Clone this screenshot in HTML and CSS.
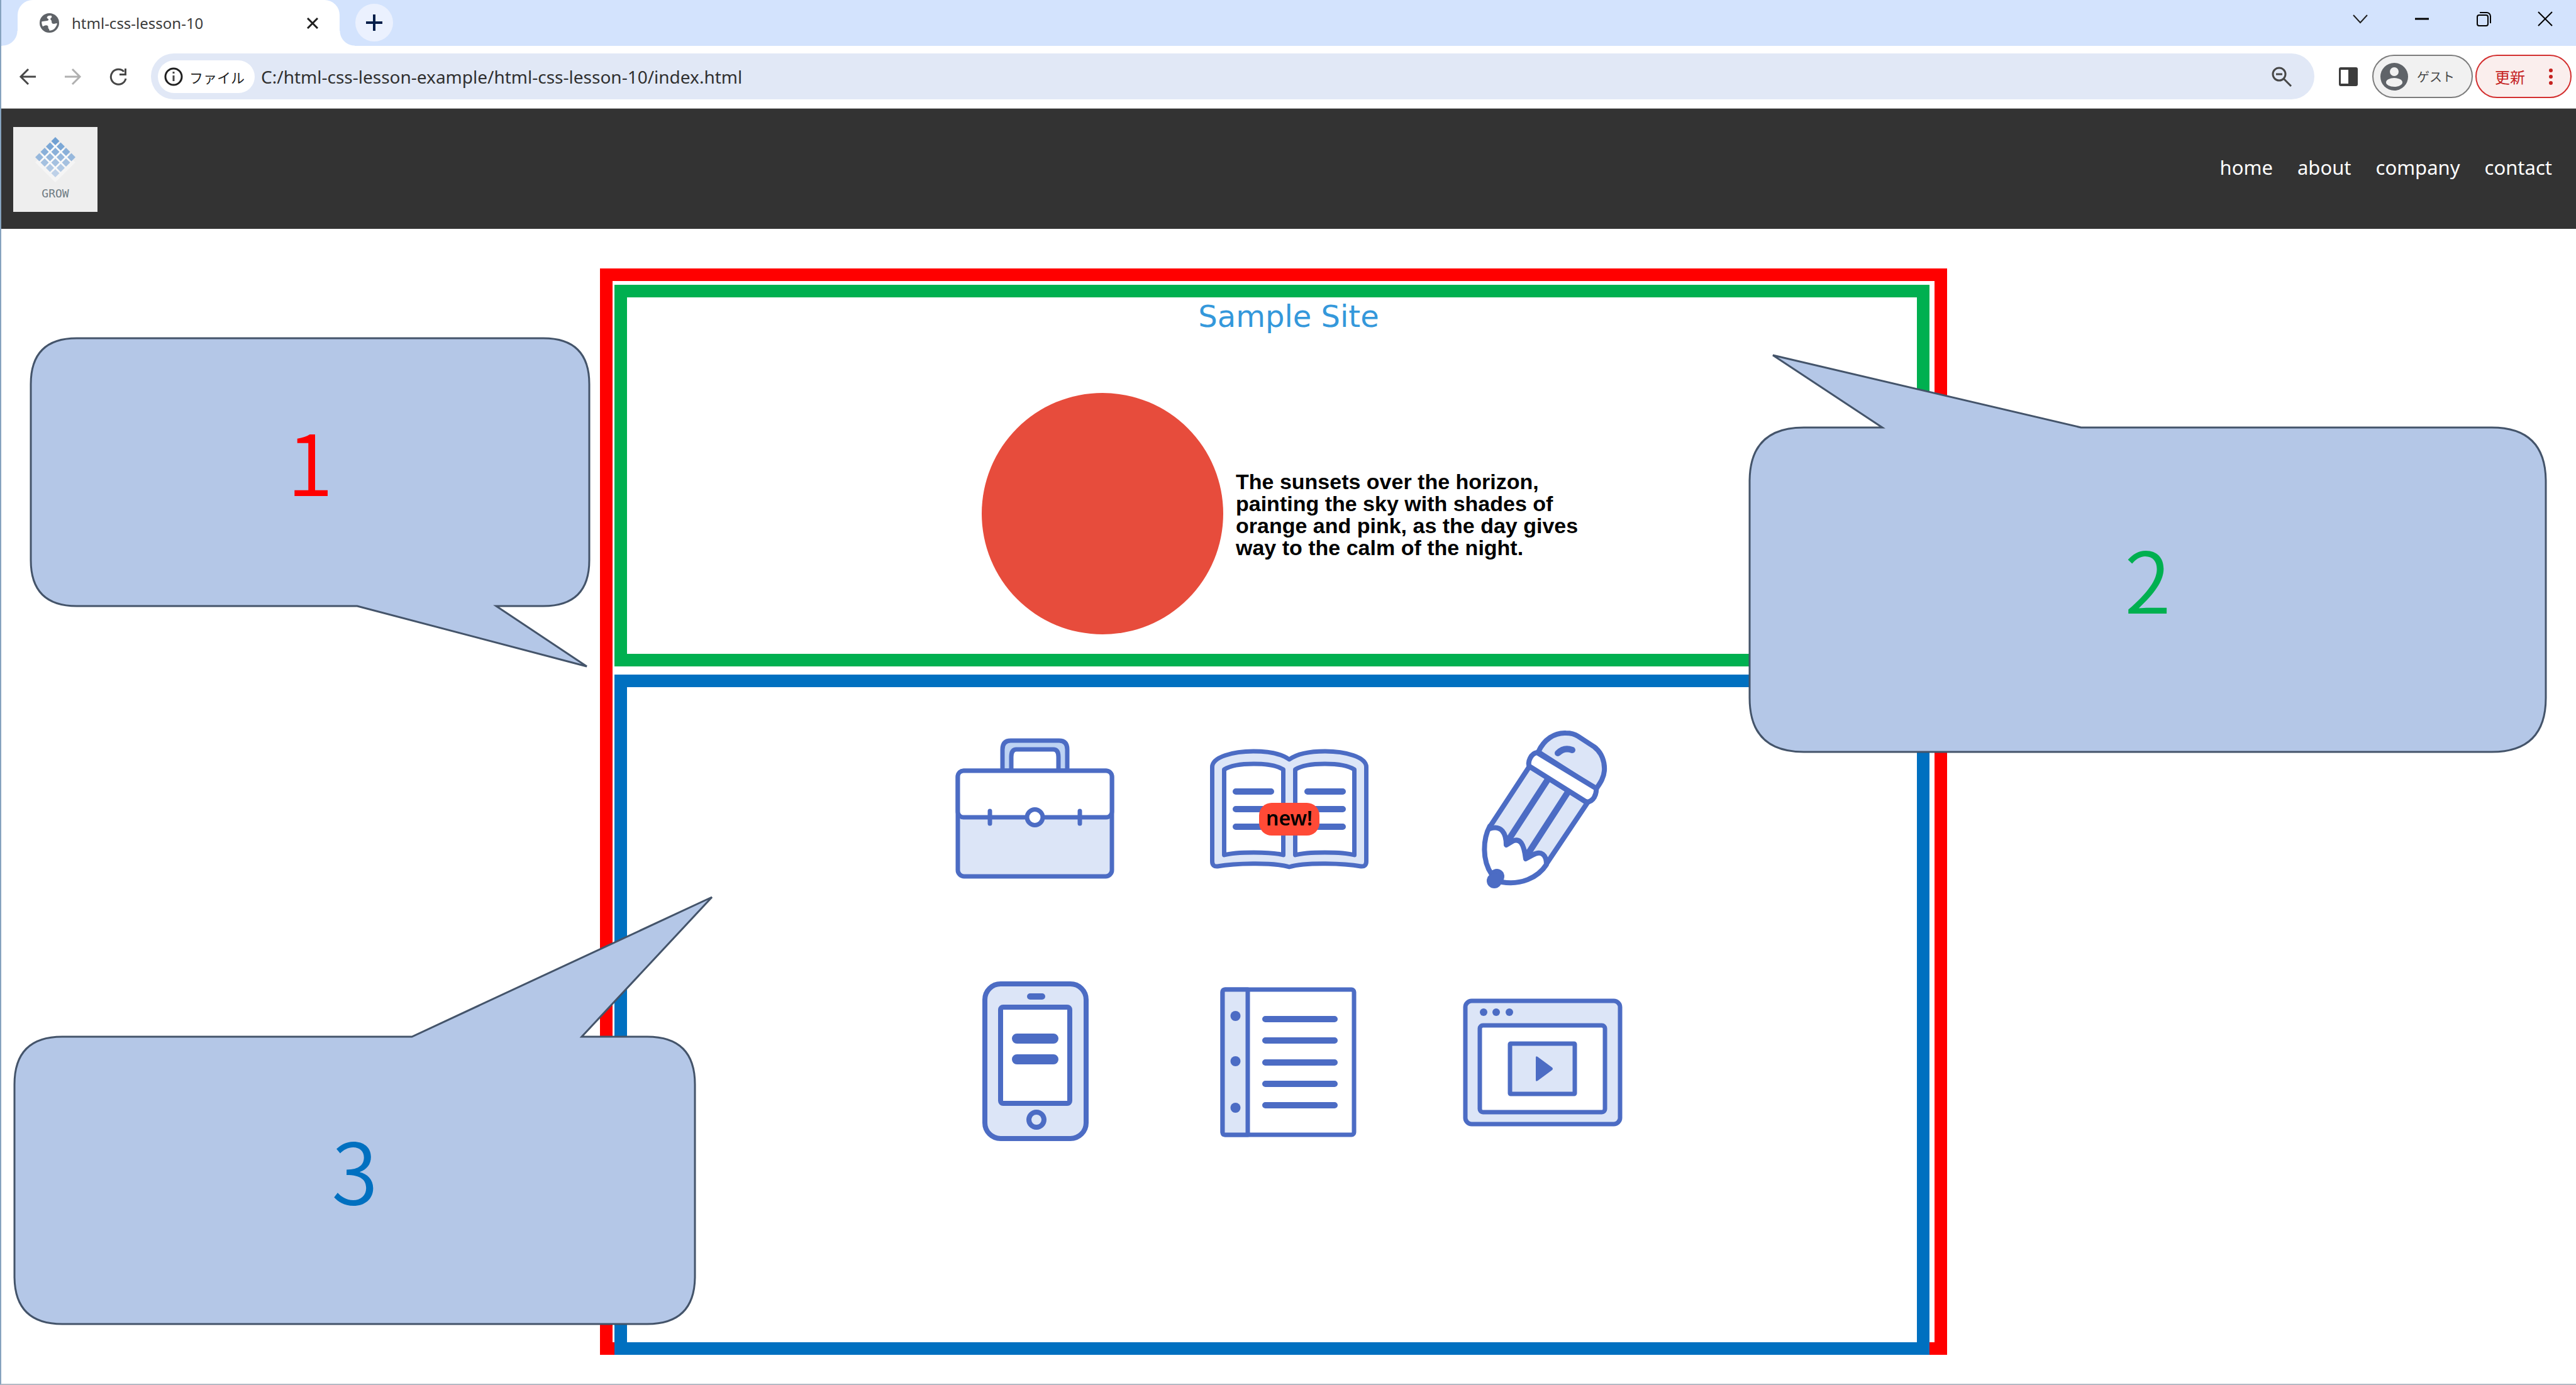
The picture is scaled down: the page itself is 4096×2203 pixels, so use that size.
FILE: index.html
```html
<!DOCTYPE html>
<html lang="ja">
<head>
<meta charset="utf-8">
<title>html-css-lesson-10</title>
<link rel="stylesheet" href="styles.css">
</head>
<body>
<div class="window">
  <div class="tabstrip">
    <div class="tab">
      <svg class="tab-globe" viewBox="0 0 24 24"><circle cx="12" cy="12" r="12" fill="#5f6368"/><path d="M14.500 3C11 2.500 9 4 9 5.500c0 1.500 2 1 2 2.500 0 2-5 1.500-8.500 2.500C2.500 13 3 15 4 16.500c1-1 3-2 5-1.500 2.500.5 1 3 2 4 .8.8 1 1.500 1 2.500 3.500 0 6-1.500 7.500-4 1-2 2-3 2-5-1.500-.5-3 1-5 .5-2.500-.5-1-3.500-2.500-4.500-1-.8-1-2 .5-3 .8-.6.5-1.500 0-2.500z" fill="#fff"/></svg>
      <span class="tab-title">html-css-lesson-10</span>
      <button class="icon-button" aria-label="タブを閉じる"><svg width="18" height="18" viewBox="0 0 18 18"><path d="M1 1l16 16M17 1L1 17" stroke="#1f1f1f" stroke-width="3"/></svg></button>
    </div>
    <button class="new-tab" aria-label="新しいタブ"><svg width="28" height="28" viewBox="0 0 28 28"><path d="M14 1v26M1 14h26" stroke="#041e49" stroke-width="4"/></svg></button>
    <div class="window-controls">
      <button class="icon-button" aria-label="タブを検索"><svg width="24" height="24" viewBox="0 0 24 24"><path d="M1 6l11 12L23 6" fill="none" stroke="#1f1f1f" stroke-width="2"/></svg></button>
      <button class="icon-button" aria-label="最小化"><svg width="24" height="24" viewBox="0 0 24 24"><path d="M1 12h22" stroke="#000" stroke-width="3"/></svg></button>
      <button class="icon-button" aria-label="元に戻す"><svg width="24" height="24" viewBox="0 0 24 24"><rect x="2" y="6" width="17" height="17" rx="3" fill="none" stroke="#000" stroke-width="2"/><path d="M6 2h11a6 6 0 0 1 6 6v11" fill="none" stroke="#000" stroke-width="2"/></svg></button>
      <button class="icon-button" aria-label="閉じる"><svg width="24" height="24" viewBox="0 0 24 24"><path d="M1 1l22 22M23 1L1 23" stroke="#000" stroke-width="2"/></svg></button>
    </div>
  </div>

  <div class="toolbar">
    <div class="history">
      <button class="icon-button" aria-label="戻る"><svg width="28" height="28" viewBox="0 0 28 28"><path d="M27 14H3M15 2L3 14l12 12" fill="none" stroke="#474747" stroke-width="3"/></svg></button>
      <button class="icon-button" aria-label="進む"><svg width="28" height="28" viewBox="0 0 28 28"><path d="M1 14h24M13 2l12 12-12 12" fill="none" stroke="#b0b0b0" stroke-width="3"/></svg></button>
      <button class="icon-button" aria-label="再読み込み"><svg width="28" height="28" viewBox="0 0 28 28"><path d="M23 6A12 12 0 1 0 26 17" fill="none" stroke="#474747" stroke-width="3"/><path d="M24 1h3v11H16V9h8z" fill="#474747"/></svg></button>
    </div>
    <div class="omnibox">
      <button class="site-info">
        <svg width="30" height="30" viewBox="0 0 30 30"><circle cx="15" cy="15" r="13" fill="none" stroke="#1f1f1f" stroke-width="3"/><path d="M15 13v9M15 7v3" stroke="#474747" stroke-width="3"/></svg>
        <span>ファイル</span>
      </button>
      <input class="url" type="text" aria-label="アドレス" value="C:/html-css-lesson-example/html-css-lesson-10/index.html">
      <button class="icon-button" aria-label="ズーム"><svg width="32" height="32" viewBox="0 0 32 32"><circle cx="12" cy="12" r="10" fill="none" stroke="#474747" stroke-width="3"/><path d="M19 19l12 12M7 12h10" stroke="#474747" stroke-width="3"/></svg></button>
    </div>
    <button class="side-panel icon-button" aria-label="サイドパネル"><svg width="30" height="30" viewBox="0 0 30 30"><rect width="30" height="30" rx="3" fill="#3c3c3c"/><rect x="3" y="4" width="12" height="22" fill="#fff"/></svg></button>
    <button class="pill guest">
      <svg width="44" height="44" viewBox="0 0 44 44"><circle cx="22" cy="22" r="22" fill="#5f6368"/><circle cx="22" cy="14" r="7" fill="#f1f1f1"/><ellipse cx="22" cy="31" rx="13" ry="7" fill="#f1f1f1"/></svg>
      <span>ゲスト</span>
    </button>
    <button class="pill update">
      <span>更新</span>
      <svg width="8" height="28" viewBox="0 0 8 28"><g fill="#c5221f"><circle cx="4" cy="4" r="3"/><circle cx="4" cy="14" r="3"/><circle cx="4" cy="24" r="3"/></g></svg>
    </button>
  </div>

  <header class="site-header">
    <a class="logo" href="#">
      <svg width="70" height="80" viewBox="0 0 70 80">
        <path d="M3 42L35 74L67 42L60 36H10Z" fill="#f5f5f5"/>
        <path d="M35 8L61 34L35 60L9 34Z" fill="#fafafa"/>
        <path d="M35 2l6.500 6.500-6.500 6.500-6.500-6.500z" fill="#70a0d2"/>
        <path d="M26.500 10.500l6.500 6.500-6.500 6.500-6.500-6.500zM43.500 10.500l6.500 6.500-6.500 6.500-6.500-6.500z" fill="#7ca8d6"/>
        <path d="M18 19l6.500 6.500-6.500 6.500-6.500-6.500zM35 19l6.500 6.500-6.500 6.500-6.500-6.500zM52 19l6.500 6.500-6.500 6.500-6.500-6.500z" fill="#8ab0d9"/>
        <path d="M9.500 27.500l6.500 6.500-6.500 6.500L3 34zM26.500 27.500l6.500 6.500-6.500 6.500-6.500-6.500zM43.500 27.500l6.500 6.500-6.500 6.500-6.500-6.500zM60.500 27.500l6.500 6.500-6.500 6.500-6.500-6.500z" fill="#97b8dc"/>
        <path d="M18 36l6.500 6.500-6.500 6.500-6.500-6.500zM35 36l6.500 6.500-6.500 6.500-6.500-6.500zM52 36l6.500 6.500-6.500 6.500-6.500-6.500z" fill="#a5c1e0"/>
        <path d="M26.500 44.500l6.500 6.500-6.500 6.500-6.500-6.500zM43.500 44.500l6.500 6.500-6.500 6.500-6.500-6.500z" fill="#b1c9e4"/>
        <path d="M35 53l6.500 6.500-6.500 6.500-6.500-6.500z" fill="#bed1e8"/>
      </svg>
      <span>GROW</span>
    </a>
    <nav class="site-nav">
      <a href="#">home</a>
      <a href="#">about</a>
      <a href="#">company</a>
      <a href="#">contact</a>
    </nav>
  </header>

  <main class="page">
    <h1 class="page-title">Sample Site</h1>
    <section class="hero">
      <div class="sun"></div>
      <p class="hero-text">The sunsets over the horizon, painting the sky with shades of orange and pink, as the day gives way to the calm of the night.</p>
    </section>
    <section class="icons">
      <div class="icon-cell">
        <svg class="icon" viewBox="0 0 256 256">
          <path class="handle" d="M77 66V32Q77 18 90 18H167Q180 18 180 32V66H166V44Q166 32 158 32H99Q91 32 91 44V66Z"/>
          <rect class="tint" x="6" y="66" width="245" height="168" rx="10"/>
          <rect class="paper" x="6" y="66" width="245" height="74" rx="9"/>
          <path class="line" d="M57 130V150M200 130V150"/>
          <circle class="paper" cx="128.500" cy="140" r="12.500"/>
        </svg>
      </div>
      <div class="icon-cell">
        <svg class="icon" viewBox="0 0 256 256">
          <path class="tint" d="M6.500 60C6.500 44 40 35 72 35C98 35 118 40 129 48C140 40 160 35 186 35C218 35 251.500 44 251.500 60V210Q251.500 219 243 218C218 213.500 156 211 129 219C102 211 40 213.500 15 218Q6.500 219 6.500 210Z"/>
          <path class="paper" d="M25.500 64C44 52 101 52 119.500 64V200C101 194.500 44 194.500 25.500 200ZM138.500 64C157 52 214 52 232.500 64V200C214 194.500 157 194.500 138.500 200Z"/>
          <path class="line bar" d="M44 99H100M44 127H100M44 155H100M158 99H214M158 127H214M158 155H214"/>
        </svg>
        <span class="badge">new!</span>
      </div>
      <div class="icon-cell">
        <svg class="icon" viewBox="0 0 256 256">
          <path class="tint thick" d="M121 36C130 16 147 5 165 6C173 6 178 7 184 11L210 28C222 37 227 52 226 66C225 78 219 86 213 95Z"/>
          <path class="tint thick" d="M107 59L44 155L132 217L199 117Z"/>
          <path class="paper thick" d="M44 154C33 174 31 208 47 231Q50 240 63 243C92 248 120 237 134 215C134 200 126 192 112 200L101 206C98 182 92 172 80 178L70 184C70 165 62 152 44 158Z"/>
          <path class="line stripe" d="M136 80L71 180M168 100L102 202"/>
          <path class="paper thick" d="M119 37Q112 38 108 46Q104 54 107 59L198 116Q206 115 210 108Q214 100 213 94Z"/>
          <path class="line stripe" d="M152 38Q162 28 175 33"/>
          <circle class="dot" cx="55" cy="234" r="12"/><circle class="dot" cx="51" cy="241" r="12"/>
        </svg>
      </div>
      <div class="icon-cell">
        <svg class="icon" viewBox="0 0 256 256">
          <rect class="tint thick" x="49" y="5" width="161" height="246" rx="25"/>
          <rect class="paper thick" x="74" y="42" width="110" height="153" rx="4"/>
          <path class="line bar" d="M121 25H140"/>
          <path class="line wide" d="M100 92H158M100 125H158"/>
          <circle class="tint thick" cx="131" cy="221" r="12"/>
        </svg>
      </div>
      <div class="icon-cell">
        <svg class="icon" viewBox="0 0 256 256">
          <rect class="paper" x="23" y="14" width="209" height="231" rx="4"/>
          <path class="tint" d="M27 14H63V245H27Q23 245 23 241V18Q23 14 27 14Z"/>
          <g class="dot"><circle cx="43.500" cy="56" r="8"/><circle cx="43.500" cy="128" r="8"/><circle cx="43.500" cy="202" r="8"/></g>
          <path class="line bar" d="M91 61H201M91 95H201M91 130H201M91 164H201M91 198H201"/>
        </svg>
      </div>
      <div class="icon-cell">
        <svg class="icon" viewBox="0 0 256 256">
          <rect class="tint" x="5" y="32" width="246" height="196" rx="10"/>
          <g class="dot"><circle cx="34" cy="50" r="6"/><circle cx="54" cy="50" r="6"/><circle cx="75" cy="50" r="6"/></g>
          <rect class="paper" x="28" y="71" width="199" height="138" rx="5"/>
          <rect class="tint" x="76" y="100" width="103" height="80" rx="1"/>
          <path class="dot" d="M117 122Q117 119 120 121L143 138Q145 140 143 142L120 159Q117 161 117 158Z"/>
        </svg>
      </div>
    </section>

    <div class="frame frame-red">
      <div class="frame-green"></div>
      <div class="frame-blue"></div>
    </div>

    <div class="callout callout-1">
      <svg class="bubble" width="890" height="524"><path d="M74 1H816Q889 1 889 74V354Q889 427 816 427H741L885 523L520 427H74Q1 427 1 354V74Q1 1 74 1Z"/></svg>
      <span>1</span>
    </div>
    <div class="callout callout-2">
      <svg class="bubble" width="1268" height="518"><path d="M87 1H212L38 -114L528 1H1181Q1267 1 1267 87V431Q1267 517 1181 517H87Q1 517 1 431V87Q1 1 87 1Z"/></svg>
      <span>2</span>
    </div>
    <div class="callout callout-3">
      <svg class="bubble" width="1084" height="459"><path d="M77 1H633L1110 -221L903 1H1007Q1083 1 1083 77V382Q1083 458 1007 458H77Q1 458 1 382V77Q1 1 77 1Z"/></svg>
      <span>3</span>
    </div>
  </main>
</div>
</body>
</html>
```
FILE: styles.css
```css
* {
  box-sizing: border-box;
}

body {
  margin: 0;
  background: #fff;
  font-family: "Noto Sans", "Noto Sans CJK JP", sans-serif;
}

button {
  margin: 0;
  padding: 0;
  border: 0;
  background: none;
  font: inherit;
  color: inherit;
}

svg {
  display: block;
  flex: none;
}

a {
  color: inherit;
  text-decoration: none;
}

.window {
  display: flex;
  flex-direction: column;
  min-height: 100vh;
  border-left: 2px solid #86a3bf;
  border-bottom: 2px solid #b3bac4;
}

.icon-button {
  display: flex;
  align-items: center;
  justify-content: center;
}

/* Browser tab strip */
.tabstrip {
  display: flex;
  height: 73px;
  padding-left: 26px;
  background: #d3e3fd;
}

.tab {
  position: relative;
  display: flex;
  align-items: center;
  gap: 20px;
  width: 512px;
  padding: 0 34px 0 35px;
  border-radius: 24px 24px 0 0;
  background: #fff;
}

.tab::before,
.tab::after {
  content: "";
  position: absolute;
  bottom: 0;
  width: 24px;
  height: 24px;
}

.tab::before {
  right: 100%;
  background: radial-gradient(circle at 0 0, transparent 23px, #fff 24px);
}

.tab::after {
  left: 100%;
  background: radial-gradient(circle at 100% 0, transparent 23px, #fff 24px);
}

.tab-globe {
  width: 31px;
  height: 31px;
}

.tab-title {
  flex: 1;
  font-size: 24px;
  line-height: 32px;
  color: #3c3c3c;
}

.new-tab {
  display: flex;
  align-items: center;
  justify-content: center;
  width: 60px;
  height: 60px;
  margin: 6px 0 0 25px;
  border-radius: 50%;
  background: #ebf1fe;
}

.window-controls {
  display: flex;
  gap: 74px;
  height: 60px;
  margin-left: auto;
  padding-right: 37px;
}

/* Browser toolbar */
.toolbar {
  display: flex;
  align-items: center;
  height: 100px;
  padding: 0 7px 2px 28px;
  border-bottom: 1px solid #b5b5b5;
}

.history {
  display: flex;
  gap: 44px;
  margin-right: 38px;
}

.omnibox {
  display: flex;
  flex: 1;
  align-items: center;
  height: 73px;
  padding: 0 36px 0 11px;
  border-radius: 37px;
  background: #e1e8f6;
}

.site-info {
  display: flex;
  align-items: center;
  gap: 10px;
  height: 52px;
  padding: 0 16px 0 10px;
  border-radius: 26px;
  background: #fff;
  font-size: 22px;
  color: #1f1f1f;
}

.url {
  flex: 1;
  min-width: 0;
  margin-left: 10px;
  padding: 0;
  border: 0;
  outline: 0;
  background: none;
  font: 28px/40px "Noto Sans", sans-serif;
  color: #303030;
}

.side-panel {
  margin: 0 23px 0 39px;
}

.pill {
  display: flex;
  align-items: center;
  height: 69px;
  border: 2px solid;
  border-radius: 35px;
}

.guest {
  gap: 14px;
  width: 160px;
  padding-left: 11px;
  border-color: #7c7c7c;
  background: #f1f1f1;
}

.guest span {
  font-size: 20px;
  color: #474747;
}

.update {
  justify-content: space-between;
  width: 153px;
  margin-left: 4px;
  padding: 0 27px 0 29px;
  border-color: #d32f2f;
  background: #faeeed;
  font-size: 24px;
  color: #c5221f;
}

/* Site header */
.site-header {
  display: flex;
  align-items: center;
  justify-content: space-between;
  height: 191px;
  padding: 2px 38px 0 19px;
  background: #333;
}

.logo {
  display: flex;
  flex-direction: column;
  align-items: center;
  width: 134px;
  height: 135px;
  padding-top: 14px;
  background: #eee;
  font: 18px/24px "DejaVu Sans Mono", monospace;
  color: #6f7c84;
}

.site-nav {
  display: flex;
  gap: 39px;
  padding-bottom: 8px;
  font-size: 31px;
  line-height: 44px;
  color: #fff;
}

/* Page content */
.page {
  position: relative;
  flex: 1;
  padding-top: 111px;
}

.page-title {
  margin: 0;
  font: 48px/56px "DejaVu Sans", sans-serif;
  text-align: center;
  color: #3498db;
}

.hero {
  display: flex;
  align-items: center;
  justify-content: center;
  gap: 20px;
  margin-top: 94px;
}

.sun {
  width: 384px;
  height: 384px;
  border-radius: 50%;
  background: #e74c3c;
}

.hero-text {
  width: 572px;
  margin: 0;
  padding-top: 4px;
  font: bold 34px/35px "Liberation Sans", Arial, sans-serif;
  color: #000;
}

.icons {
  display: grid;
  grid-template-columns: repeat(3, 404px);
  grid-auto-rows: 400px;
  justify-content: center;
  margin-top: 79px;
}

.icon-cell {
  position: relative;
  display: flex;
  align-items: center;
  justify-content: center;
}

.icon {
  width: 256px;
  height: 256px;
  overflow: visible;
  fill: none;
  stroke: #4c6cc4;
  stroke-width: 7px;
  stroke-linejoin: round;
  stroke-linecap: round;
}

.tint {
  fill: #dce5f7;
}

.handle {
  fill: #bed3f3;
}

.paper {
  fill: #fff;
}

.dot {
  fill: #4c6cc4;
  stroke: none;
}

.thick {
  stroke-width: 8px;
}

.bar,
.stripe {
  stroke-width: 10px;
}

.wide {
  stroke-width: 16px;
}

.badge {
  position: absolute;
  top: 189px;
  left: 155px;
  width: 96px;
  height: 52px;
  border-radius: 20px;
  background: #ff4a36;
  font-size: 32px;
  font-weight: 600;
  line-height: 48px;
  text-align: center;
  color: #000;
}

/* Frames that mark the nested boxes */
.frame {
  position: absolute;
  top: 63px;
  right: 1000px;
  bottom: 46px;
  left: 952px;
  display: flex;
  flex-direction: column;
  gap: 13px;
  padding: 6px 8px 0 3px;
  border: 20px solid #f00;
}

.frame-green {
  flex: 0 0 607px;
  border: 20px solid #00b050;
}

.frame-blue {
  flex: 1;
  margin-bottom: -20px;
  border: 20px solid #0070c0;
}

/* Numbered callouts */
.callout {
  position: absolute;
  display: flex;
  align-items: center;
  justify-content: center;
  padding-bottom: 40px;
  font: 350 134px/160px "Noto Sans CJK JP", sans-serif;
}

.callout span {
  position: relative;
}

.bubble {
  position: absolute;
  top: 0;
  left: 0;
  overflow: visible;
  fill: #b4c7e7;
  stroke: #44546a;
  stroke-width: 3px;
}

.callout-1 {
  top: 173px;
  left: 46px;
  width: 890px;
  height: 428px;
  color: #f00;
}

.callout-2 {
  top: 315px;
  right: 47px;
  width: 1268px;
  height: 518px;
  color: #00b050;
}

.callout-3 {
  top: 1284px;
  left: 20px;
  width: 1084px;
  height: 459px;
  color: #0070c0;
}
```
